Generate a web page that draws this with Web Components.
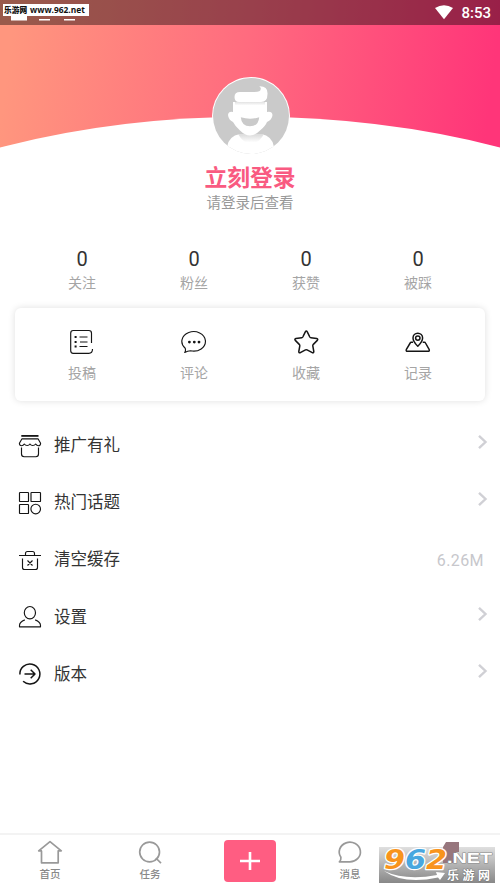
<!DOCTYPE html>
<html lang="zh-CN">
<head>
<meta charset="UTF-8">
<meta name="viewport" content="width=device-width, initial-scale=1">
<title>我的</title>
<style>
  body {
    margin: 0;
    background: #fff;
    font-family: Roboto, "Noto Sans CJK SC", sans-serif;
    color: #333;
  }
</style>
</head>
<body>
<profile-page></profile-page>

<script>
// Inline icons, keyed by name
const ICONS = {
  post: `<svg width="24" height="26" viewBox="0 0 24 26"><path d="M21.500 14V4.200Q21.500 1.500 18.800 1.500H3.200Q.7 1.500 .7 4.200V21.500Q.7 24.300 3.200 24.300H18.800Q22.500 24.300 22.500 20"/><path d="M9.500 8h8M10 13h7.500M9.500 17.500h8"/><path stroke-width="2.200" d="M4.600 8h2M4.600 13h2M4.600 17.500h2"/></svg>`,
  comment: `<svg width="26" height="26" viewBox="0 0 26 26"><path d="M4.200 19.200A11.800 9.800 0 1 1 9.500 21.800Q6.700 21.900 3.700 23.500Q5 21.500 4.200 19.200Z"/><path stroke-width="2.800" stroke-linecap="round" d="M8.400 13.100h.01M13.300 13.100h.01M18 13.100h.01"/></svg>`,
  star: `<svg width="26" height="26" viewBox="0 0 26 26"><path stroke-width="1.500" d="M12.300 2.900Q13.300 1.300 14.300 2.900L16.800 8Q17.200 8.700 17.900 8.800L23.700 9.600Q25.400 10 24.300 11.400L20.100 15.600Q19.700 16.100 19.800 16.800L20.800 22.500Q20.800 24.200 19.300 23.700L14.100 20.900Q13.300 20.500 12.500 20.900L7.300 23.700Q5.700 24.200 5.800 22.500L6.800 16.800Q6.900 16.100 6.500 15.600L2.300 11.400Q1.200 10 2.900 9.600L8.700 8.800Q9.400 8.700 9.800 8Z"/></svg>`,
  record: `<svg width="26" height="26" viewBox="0 0 26 26"><g stroke-width="1.500"><path d="M12.800 17.300Q8 12.500 8 9A4.800 4.800 0 0 1 17.600 9Q17.600 12.500 12.800 17.300Z"/><circle cx="12.800" cy="9.100" r="2.200"/><path d="M8 13.300H6.200Q5.500 13.300 5.200 14L1.400 20.300Q.6 22.300 2.600 22.300H22.900Q24.900 22.300 24.100 20.300L20.500 14Q20.200 13.300 19.500 13.300H17.700"/></g></svg>`,
  shop: `<svg width="24" height="24" viewBox="0 0 24 24"><path stroke-width="1.800" d="M3.300 1.900H20.500"/><path d="M4 4.800H20L22.600 9.200Q22.600 11.700 20.400 11.700Q18.800 11.700 17.700 10Q16.600 11.500 14.700 11.500Q12.900 11.500 12 10Q11 11.500 9.200 11.500Q7.300 11.500 6.300 10Q5.200 11.700 3.600 11.700Q1.400 11.700 1.400 9.200Z"/><path d="M3.500 13.500V20Q3.500 22.700 6.200 22.700H17.800Q20.500 22.700 20.500 20V13.500"/></svg>`,
  topic: `<svg width="24" height="24" viewBox="0 0 24 24"><rect x="1.500" y="1.500" width="9" height="9" rx=".6"/><rect x="13" y="1.500" width="9.500" height="9" rx=".6"/><rect x="1.500" y="13.500" width="9" height="9" rx=".6"/><circle cx="17.700" cy="18" r="4.800"/></svg>`,
  trash: `<svg width="24" height="24" viewBox="0 0 24 24"><path d="M1 7.500H23M7.500 7.500V5.500Q7.500 3.500 9.500 3.500H14.500Q16.500 3.500 16.500 5.500V7.500M4.500 10.500V19.500Q4.500 21.500 6.500 21.500H17.500Q19.500 21.500 19.500 19.500V10.500M9.500 12.500l5 5M14.500 12.500l-5 5"/></svg>`,
  user: `<svg width="24" height="24" viewBox="0 0 24 24"><ellipse cx="11.900" cy="7.700" rx="5.600" ry="6.200"/><path d="M6.800 14.900Q1.500 17 1.500 20.500V21.800H22.500V20.500Q22.500 17 17.200 14.900"/></svg>`,
  version: `<svg width="24" height="24" viewBox="0 0 24 24"><g stroke-width="1.500"><path d="M1.900 12.500A10 10 0 1 1 5.100 19.300"/><path d="M6.500 12H16.800M12.700 7.800L17 12L12.700 16.200"/></g></svg>`,
  home: `<svg width="26" height="25" viewBox="0 0 26 25"><path d="M5 10.800H1.700L13 1.700L24.300 10.800H21.200V22.800H4.500V10.800"/></svg>`,
  search: `<svg width="26" height="25" viewBox="0 0 26 25"><circle cx="12.600" cy="12" r="9.900"/><path d="M18.800 18L24 23.200"/></svg>`,
  message: `<svg width="26" height="25" viewBox="0 0 26 25"><path d="M3.900 17.300A10.600 9.800 0 1 1 12.100 21.800H2.400Q4.200 20 3.900 17.300Z"/></svg>`
};

class AppIcon extends HTMLElement {
  connectedCallback() {
    this.attachShadow({ mode: "open" }).innerHTML = `
      <style>
        :host { display: block; line-height: 0; color: #151515; }
        svg { display: block; fill: none; stroke: currentColor; stroke-width: var(--icon-stroke, 1.15); stroke-linejoin: round; }
      </style>
      ${ICONS[this.getAttribute("name")] || ""}
    `;
  }
}

class StatusBar extends HTMLElement {
  connectedCallback() {
    this.attachShadow({ mode: "open" }).innerHTML = `
      <style>
        :host {
          display: flex;
          align-items: center;
          justify-content: space-between;
          box-sizing: border-box;
          height: 25px;
          padding: 0 9px 0 3px;
          background: rgba(0, 0, 0, .4);
          color: #fff;
        }
        .left { display: grid; align-self: start; padding-top: 4px; }
        .site {
          display: flex;
          align-items: center;
          gap: 3px;
          width: 85px;
          height: 12px;
          padding-left: 1px;
          background: #fff;
          color: #111;
          font: bold 8.400px/12px "Open Sans", "Noto Sans CJK SC", sans-serif;
          white-space: nowrap;
        }
        .site b { font-size: 7.700px; }
        .marks { display: block; }
        .right { display: flex; align-items: center; gap: 8px; font-size: 15px; line-height: 25px; font-weight: 500; }
        .right span { padding-top: 1px; }
      </style>
      <div class="left">
        <div class="site"><b>乐游网</b><span>www.962.net</span></div>
        <svg class="marks" width="86" height="5" fill="#fff"><path d="M8 0h16v4.500H8zM36 3h11v1.400H36zM61 3h11v1.400H61z"/></svg>
      </div>
      <div class="right">
        <svg width="18" height="15" viewBox="0 0 18 15"><path fill="#fff" d="M0 3Q9-2.600 18 3L9 14.200Z"/></svg>
        <span>8:53</span>
      </div>
    `;
  }
}

class ProfileHero extends HTMLElement {
  connectedCallback() {
    this.attachShadow({ mode: "open" }).innerHTML = `
      <style>
        :host { display: block; height: 234px; text-align: center; }
        .cover {
          display: flex;
          flex-direction: column;
          justify-content: space-between;
          height: 148px;
          background: linear-gradient(97deg, #ff967e 3%, #ff6b7f 49%, #ff3579 97%);
        }
        .curve { display: block; }
        .avatar { display: block; position: relative; margin: -72px auto 0; left: 1px; }
        h1 { margin: 7px 0 0; font-size: 22.800px; line-height: 32px; font-weight: 700; color: #f95a81; }
        p { margin: -1px 0 0; font-size: 14.500px; line-height: 20px; color: #999; }
      </style>
      <div class="cover">
        <status-bar></status-bar>
        <svg class="curve" width="500" height="32" viewBox="0 0 500 32"><path fill="#fff" d="M0 31.500Q118 .8 250 .8T500 31.500V32H0Z"/></svg>
      </div>
      <svg class="avatar" width="80" height="80" viewBox="0 0 80 80">
        <defs>
          <clipPath id="round"><circle cx="40" cy="40" r="38"/></clipPath>
          <linearGradient id="neck" x2="0" y2="1"><stop offset=".1" stop-color="#dedede"/><stop offset=".85" stop-color="#fff"/></linearGradient>
          <linearGradient id="brow" x2="0" y2="1"><stop stop-color="#e2e2e2"/><stop offset="1" stop-color="#fff"/></linearGradient>
        </defs>
        <circle cx="40" cy="40" r="39" fill="#fff"/>
        <g clip-path="url(#round)">
          <rect width="80" height="80" fill="#cacaca"/>
          <path fill="#fff" d="M0 70H80V80H0Z"/>
          <path fill="#fff" d="M16 71Q17.500 60 29 58H50Q61.500 60 63 71Z"/>
          <path fill="url(#neck)" d="M27 58H53Q48 67 40 68Q32 67 27 58Z"/>
          <path fill="#fff" d="M22 26H56V36Q61 35 61.500 39Q61 44 56 46Q54.500 50 49 54.500Q44 59.500 39 59.500Q34 59.500 29 54.500Q24 50 22 46Q17.500 44 17 39Q17.500 35 22 36Z"/>
          <path fill="url(#brow)" d="M24 26H54V29.500H24Z"/>
          <path fill="#fff" d="M29 16H43.500Q50 16 49.800 12.500Q49.600 11 48.300 10.300Q57 10 56.500 18Q56.500 26 50 26H28Q23.500 26 23.500 21Q23.500 16 29 16Z"/>
          <path fill="#cacaca" d="M29.800 41.300Q39 44 48.200 41.300Q47.500 50.300 39 50.300Q30.500 50.300 29.800 41.300Z"/>
        </g>
      </svg>
      <h1><slot name="title"></slot></h1>
      <p><slot name="hint"></slot></p>
    `;
  }
}

class StatItem extends HTMLElement {
  connectedCallback() {
    this.attachShadow({ mode: "open" }).innerHTML = `
      <style>
        :host { display: flex; flex-direction: column; align-items: center; padding-top: 12px; }
        .count { font-size: 20px; line-height: 26px; color: #333; }
        .label { font-size: 14px; line-height: 22px; color: #a5a5a5; }
      </style>
      <span class="count">${this.getAttribute("count")}</span>
      <span class="label"><slot></slot></span>
    `;
  }
}

class ShortcutItem extends HTMLElement {
  connectedCallback() {
    this.attachShadow({ mode: "open" }).innerHTML = `
      <style>
        :host { display: flex; flex-direction: column; align-items: center; padding-top: 21px; }
        .label { margin-top: 7px; font-size: 14px; line-height: 22px; color: #a5a5a5; }
      </style>
      <app-icon name="${this.getAttribute("icon")}"></app-icon>
      <span class="label"><slot></slot></span>
    `;
  }
}

class MenuRow extends HTMLElement {
  connectedCallback() {
    const value = this.getAttribute("value");
    this.attachShadow({ mode: "open" }).innerHTML = `
      <style>
        :host { display: flex; align-items: center; height: 57.200px; padding: 0 16px 0 18px; }
        app-icon { padding-top: 2px; }
        .label { flex: 1; margin-left: 12px; padding-top: 3px; font-size: 16.500px; line-height: 24px; color: #333; }
        .value { padding-top: 3px; font-size: 16px; letter-spacing: .4px; color: #c7c7cc; }
        .arrow { display: block; margin: 0 -5px 5px 0; }
      </style>
      <app-icon name="${this.getAttribute("icon")}"></app-icon>
      <span class="label"><slot></slot></span>
      ${value
        ? `<span class="value">${value}</span>`
        : `<svg class="arrow" width="12" height="16" viewBox="0 0 12 16"><path d="M2 1.800L8.500 8L2 14.200" fill="none" stroke="#d0d0d5" stroke-width="2.400"/></svg>`}
    `;
  }
}

class TabItem extends HTMLElement {
  connectedCallback() {
    this.attachShadow({ mode: "open" }).innerHTML = `
      <style>
        :host { display: flex; flex-direction: column; align-items: center; padding-top: 5px; --icon-stroke: 1.700; }
        app-icon { color: #999; }
        .label { margin-top: 2px; font-size: 10.500px; line-height: 16px; font-weight: 500; color: #888; }
      </style>
      <app-icon name="${this.getAttribute("icon")}"></app-icon>
      <span class="label"><slot></slot></span>
    `;
  }
}

class SiteBadge extends HTMLElement {
  connectedCallback() {
    this.attachShadow({ mode: "open" }).innerHTML = `
      <style>
        :host { display: block; width: 116px; height: 36px; background: linear-gradient(#dfdfdf, #888); }
        svg { display: block; overflow: visible; }
        text { paint-order: stroke; stroke-linejoin: round; }
        .num { font: italic bold 27px "DejaVu Sans", sans-serif; stroke: #fff; stroke-width: 2.500px; }
        .net { font: bold 14.500px "Liberation Sans", sans-serif; fill: #fff; stroke: #888; stroke-width: 1px; }
        .name { font: bold 12px "Noto Sans CJK SC", sans-serif; fill: #fff; stroke: #777; stroke-width: 1px; }
      </style>
      <svg width="116" height="36" viewBox="0 0 116 36">
        <path fill="#97767d" d="M67-5H80V5H77V16H64V0Z"/>
        <text class="num" x="5" y="21.500" fill="#f8941d" textLength="63" lengthAdjust="spacingAndGlyphs">9<tspan fill="#48a7df">6</tspan>2</text>
        <path fill="#fff" d="M5 24Q27 34 58 28L57 25L66 26L61 33L59 30.500Q25 38 5 24Z"/>
        <text class="net" x="68" y="16.300" textLength="45" lengthAdjust="spacingAndGlyphs">.NET</text>
        <text class="name" x="68" y="33.400" textLength="43">乐游网</text>
      </svg>
    `;
  }
}

class TabBar extends HTMLElement {
  connectedCallback() {
    this.attachShadow({ mode: "open" }).innerHTML = `
      <style>
        :host {
          display: grid;
          grid-template-columns: repeat(5, 1fr);
          box-sizing: border-box;
          position: relative;
          height: 55px;
          border-top: 2px solid #f3f3f3;
          background: #fff;
        }
        .add {
          display: grid;
          place-items: center;
          justify-self: center;
          width: 52px;
          height: 42px;
          margin-top: 5px;
          border-radius: 4px;
          background: #ff5d82;
        }
        site-badge { position: absolute; right: 5px; top: 12px; }
      </style>
      <tab-item icon="home">首页</tab-item>
      <tab-item icon="search">任务</tab-item>
      <div class="add"><svg width="22" height="20" viewBox="0 0 22 20"><path d="M11 1V19M1 10H21" stroke="#fff" stroke-width="2.600"/></svg></div>
      <tab-item icon="message">消息</tab-item>
      <site-badge></site-badge>
    `;
  }
}

class ProfilePage extends HTMLElement {
  connectedCallback() {
    this.attachShadow({ mode: "open" }).innerHTML = `
      <style>
        :host { display: flex; flex-direction: column; height: 888px; overflow: hidden; }
        .stats, .card { display: grid; grid-template-columns: repeat(4, 112px); justify-content: center; }
        .stats { height: 74px; }
        .card {
          height: 93px;
          margin: 0 15px;
          border-radius: 6px;
          background: #fff;
          box-shadow: 0 0 7px rgba(0, 0, 0, .13);
        }
        .menu { flex: 1; padding-top: 15px; }
      </style>
      <profile-hero>
        <span slot="title">立刻登录</span>
        <span slot="hint">请登录后查看</span>
      </profile-hero>
      <div class="stats">
        <stat-item count="0">关注</stat-item>
        <stat-item count="0">粉丝</stat-item>
        <stat-item count="0">获赞</stat-item>
        <stat-item count="0">被踩</stat-item>
      </div>
      <div class="card">
        <shortcut-item icon="post">投稿</shortcut-item>
        <shortcut-item icon="comment">评论</shortcut-item>
        <shortcut-item icon="star">收藏</shortcut-item>
        <shortcut-item icon="record">记录</shortcut-item>
      </div>
      <div class="menu">
        <menu-row icon="shop">推广有礼</menu-row>
        <menu-row icon="topic">热门话题</menu-row>
        <menu-row icon="trash" value="6.26M">清空缓存</menu-row>
        <menu-row icon="user">设置</menu-row>
        <menu-row icon="version">版本</menu-row>
      </div>
      <tab-bar></tab-bar>
    `;
  }
}

customElements.define("app-icon", AppIcon);
customElements.define("status-bar", StatusBar);
customElements.define("profile-hero", ProfileHero);
customElements.define("stat-item", StatItem);
customElements.define("shortcut-item", ShortcutItem);
customElements.define("menu-row", MenuRow);
customElements.define("tab-item", TabItem);
customElements.define("site-badge", SiteBadge);
customElements.define("tab-bar", TabBar);
customElements.define("profile-page", ProfilePage);
</script>
</body>
</html>
